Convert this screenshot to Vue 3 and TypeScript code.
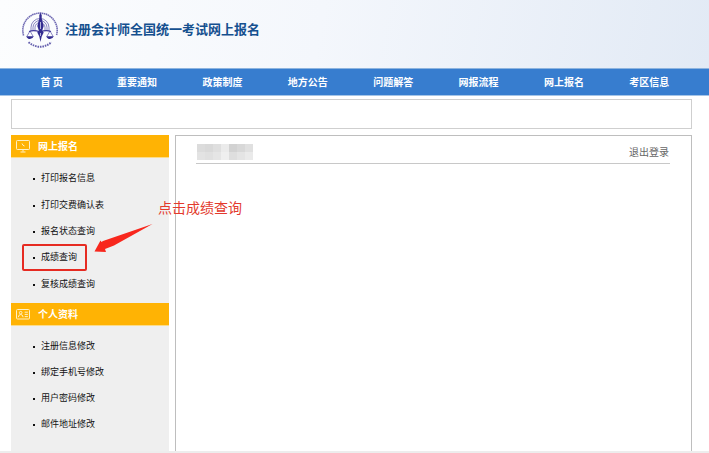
<script setup lang="ts">
interface MenuItem {
  label: string
  marked?: boolean
}

interface MenuGroup {
  title: string
  icon: 'monitor' | 'card'
  items: MenuItem[]
}

const navItems: string[] = ['首 页', '重要通知', '政策制度', '地方公告', '问题解答', '网报流程', '网上报名', '考区信息']

const groups: MenuGroup[] = [
  {
    title: '网上报名',
    icon: 'monitor',
    items: [
      { label: '打印报名信息' },
      { label: '打印交费确认表' },
      { label: '报名状态查询' },
      { label: '成绩查询', marked: true },
      { label: '复核成绩查询' },
    ],
  },
  {
    title: '个人资料',
    icon: 'card',
    items: [
      { label: '注册信息修改' },
      { label: '绑定手机号修改' },
      { label: '用户密码修改' },
      { label: '邮件地址修改' },
    ],
  },
]

const maskTones: string[] = [
  '#dcdcdc', '#d9d9d9', '#dfdfdf', '#ebebeb', '#d2d2d2', '#d8d8d8', '#e0e0e0',
  '#e3e3e3', '#e0e0e0', '#e5e5e5', '#efefef', '#dedede', '#e4e4e4', '#eaeaea',
]
</script>

<template>
  <div class="page">
    <header class="banner">
      <svg class="logo" viewBox="0 0 38 40" aria-hidden="true">
        <g fill="none" stroke="#40389a">
          <path d="M2.6 26.5A17.2 17.2 0 1 1 35.4 26.5" stroke-width="1.6" stroke-dasharray="1.5 .5" opacity=".75" />
          <path d="M7.5 33.2Q19 42.4 30.5 33.2" stroke-width="1.9" stroke-dasharray="1.6 .9" opacity=".8" />
          <path d="M10 22V18.5a9 9 0 0 1 18 0V22M12 22V18.5a7 7 0 0 1 14 0V22M14 22V18.5a5 5 0 0 1 10 0V22" stroke-width="1" opacity=".6" />
          <path d="M8 22.5Q13 20.5 19 23Q25 20.5 30 22.5" stroke-width="1.2" />
          <path d="M9 22l-3.2 5.5M9 22l3.2 5.5M29 22l-3.2 5.5M29 22l3.2 5.5" stroke-width=".6" />
        </g>
        <g fill="#342d91">
          <path d="M5.3 27.2h7.4Q11.8 30 9 30T5.3 27.2zM25.3 27.2h7.4Q31.8 30 29 30t-3.7-2.8z" />
          <path d="M19.5 4l1.2 2v3.500l2 7.500-1.500 4.500 1.500 2-2 4-1.200 5.500-1.200-5.500-2-4 1.500-2-1.500-4.500 2-7.500V6z" />
        </g>
        <path d="M19.5 13v7M19.5 24v3" stroke="#e8e9f8" stroke-width=".7" />
      </svg>
      <h1 class="title">注册会计师全国统一考试网上报名</h1>
    </header>

    <nav class="nav">
      <a v-for="item in navItems" :key="item" class="nav-link" href="#">{{ item }}</a>
    </nav>

    <div class="content">
      <div class="notice"></div>
      <div class="columns">
        <aside class="sidebar">
          <section v-for="group in groups" :key="group.title">
            <h2 class="group-title">
              <svg v-if="group.icon === 'monitor'" class="group-icon" viewBox="0 0 14 13" aria-hidden="true">
                <rect x=".5" y=".5" width="13" height="9" rx=".8" />
                <path d="M6 3.500l1 1.800 1.500.7M7 9.500v2M4.500 12h5" />
              </svg>
              <svg v-else class="group-icon" viewBox="0 0 14 13" aria-hidden="true">
                <rect x=".5" y="1.5" width="13" height="9.5" rx="1" />
                <circle cx="4.7" cy="4.7" r="1.3" />
                <path d="M2.300 9.200q.3-2.700 2.400-2.700t2.400 2.700M8.700 4.200h3.200M8.700 6.400h3.200M8.700 8.600h3.200" />
              </svg>
              {{ group.title }}
            </h2>
            <ul class="menu" :class="group.icon">
              <li v-for="item in group.items" :key="item.label" class="menu-item">
                <a class="menu-link" href="#">{{ item.label }}</a>
                <div v-if="item.marked" class="marker"></div>
                <svg v-if="item.marked" class="arrow" viewBox="0 0 60 32" aria-hidden="true">
                  <path d="M58.500 1L9 18 7.500 19 6.500 17.500.5 28.500 12 29 11 26 20 22.500z" />
                </svg>
                <span v-if="item.marked" class="hint">点击成绩查询</span>
              </li>
            </ul>
          </section>
        </aside>

        <main class="panel">
          <div class="user-bar">
            <div class="mask">
              <i v-for="(tone, i) in maskTones" :key="i" :style="{ background: tone }"></i>
            </div>
            <a class="logout" href="#">退出登录</a>
          </div>
        </main>
      </div>
    </div>
  </div>
</template>

<style>
body {
  margin: 0;
  background: #fff;
}
</style>

<style scoped>
.page {
  box-sizing: border-box;
  display: flex;
  flex-direction: column;
  min-height: 100vh;
  border-bottom: 2px solid #ededed;
  font-family: "Noto Sans CJK SC", "Liberation Sans", sans-serif;
  font-size: 9px;
  color: #111;
}

a {
  color: inherit;
  text-decoration: none;
}

.banner {
  display: flex;
  align-items: center;
  gap: 6px;
  height: 58px;
  padding: 0 21px 10px;
  background: linear-gradient(100deg, #fcfdfe 0%, #f4f7fc 45%, #e2eaf5 100%);
}

.logo {
  width: 38px;
  height: 40px;
}

.title {
  margin: 0;
  font-size: 13px;
  line-height: 20px;
  color: #15508f;
}

.nav {
  display: grid;
  grid-template-columns: repeat(8, 1fr);
  padding: 0 17px 0 9px;
  border-top: 1px solid #8db4df;
  border-bottom: 1px solid #a4c4e7;
  background: #377dcf;
}

.nav-link {
  font-size: 10px;
  font-weight: 700;
  line-height: 26px;
  text-align: center;
  color: #fff;
}

.content {
  display: flex;
  flex: 1;
  flex-direction: column;
  gap: 6px;
  padding: 3px 17px 0 11px;
}

.notice {
  height: 28px;
  border: 1px solid #cfcfcf;
}

.columns {
  display: grid;
  flex: 1;
  grid-template-columns: 158px 1fr;
  gap: 6px;
}

.sidebar {
  background: #efefef;
}

.group-title {
  display: flex;
  align-items: center;
  gap: 8px;
  margin: 0;
  padding: 0 5px;
  border-bottom: 1px solid #fbdc8b;
  background: #ffb304;
  font-size: 10px;
  line-height: 22px;
  color: #fff;
}

.group-icon {
  width: 14px;
  height: 13px;
  fill: none;
  stroke: #fff0c4;
  stroke-width: 1;
}

.menu {
  display: grid;
  margin: 0;
  padding: 7px 0 6px 30px;
  list-style: none;
}

.menu.monitor {
  min-height: 132px;
}

.menu-item {
  position: relative;
  display: flex;
  align-items: center;
  line-height: 26px;
}

.menu-item::before {
  width: 2px;
  height: 2px;
  margin: 2px 6px 0 -8px;
  background: #111;
  content: "";
}

.marker {
  position: absolute;
  top: 0;
  left: -19px;
  box-sizing: border-box;
  width: 65px;
  height: 27px;
  border: 2px solid #e62b22;
  border-radius: 2px;
  pointer-events: none;
}

.arrow {
  position: absolute;
  top: -21px;
  left: 53px;
  z-index: 1;
  width: 60px;
  height: 32px;
  fill: #f8271d;
}

.hint {
  position: absolute;
  top: -47px;
  left: 117px;
  z-index: 1;
  font-size: 14px;
  line-height: 20px;
  white-space: nowrap;
  color: #e33a2d;
}

.panel {
  padding: 6px 21px 0 20px;
  border: 1px solid #bebebe;
  border-bottom: 0;
}

.user-bar {
  display: flex;
  align-items: center;
  justify-content: space-between;
  height: 20px;
  padding: 0 1px 1px;
  border-bottom: 1px solid #c8c8c8;
}

.mask {
  display: grid;
  grid-template-columns: repeat(7, 8px);
  grid-auto-rows: 8px;
}

.logout {
  font-size: 10px;
  line-height: 16px;
  color: #666;
}
</style>
